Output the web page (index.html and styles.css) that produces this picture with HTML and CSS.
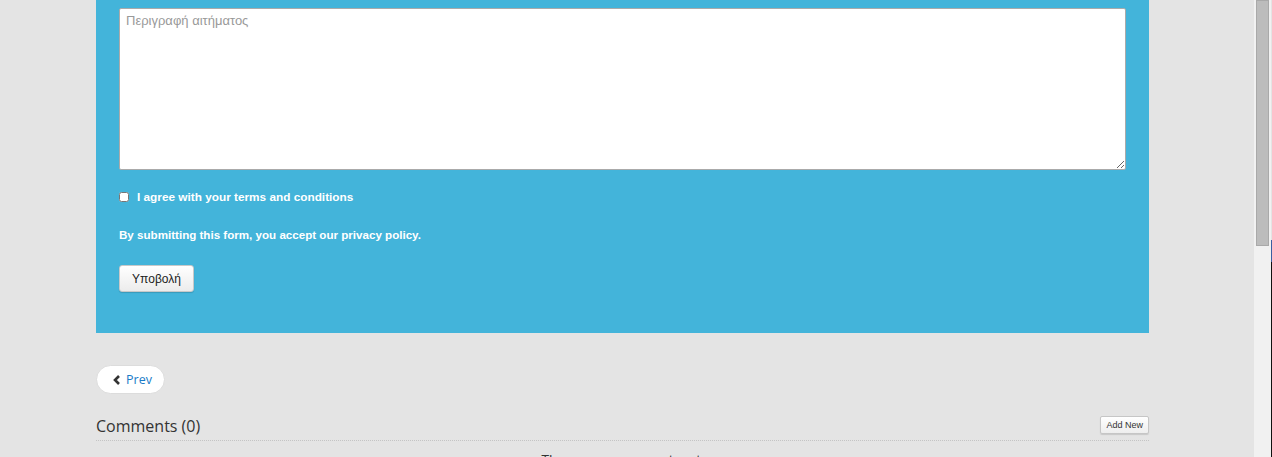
FILE: index.html
```html
<!DOCTYPE html>
<html lang="el">
<head>
  <meta charset="UTF-8" />
  <meta name="viewport" content="width=device-width, initial-scale=1" />
  <title>Αίτημα</title>
  <link rel="stylesheet" href="styles.css">
</head>
<body>

  <div class="page">
    <div class="content">
      <form class="request-form">
        <textarea class="request-text" placeholder="Περιγραφή αιτήματος"></textarea>

        <label class="terms">
          <input type="checkbox" />
          <span>I agree with your terms and conditions</span>
        </label>

        <p class="privacy">By submitting this form, you accept our privacy policy.</p>

        <button type="button" class="submit-btn">Υποβολή</button>
      </form>

      <div class="pager">
        <a href="#" class="prev-btn">
          <svg width="8" height="10" viewBox="0 0 8 10"><path d="M6 1 L2 5 L6 9" fill="none" stroke="#333" stroke-width="2.6"/></svg>
          Prev
        </a>
      </div>

      <div class="comments-head">
        <h3>Comments (0)</h3>
        <button type="button" class="add-btn">Add New</button>
      </div>
      <p class="no-comments">There are no comments yet.</p>
    </div>
  </div>

  <div class="scrollbar">
    <div class="thumb"></div>
  </div>
  <div class="edge"></div>

</body>
</html>
```

FILE: styles.css
```css
html, body {
  margin: 0;
  height: 457px;
  overflow: hidden;
}
body {
  display: flex;
  background: #e4e4e4;
  font-family: 'Liberation Sans', Arial, sans-serif;
}
.page {
  width: 1254px;
  flex-shrink: 0;
}
.content {
  width: 1053px;
  margin-left: 96px;
}
.request-form {
  background: #43b4da;
  padding: 8px 23px 41px;
  display: flex;
  flex-direction: column;
  align-items: flex-start;
}
.request-text {
  box-sizing: border-box;
  width: 1007px;
  height: 162px;
  margin: 0;
  padding: 4px 6px;
  border: 1px solid #aaa;
  border-radius: 2px;
  background: #fff;
  font-family: 'Liberation Sans', Arial, sans-serif;
  font-size: 13px;
  color: #555;
  resize: vertical;
}
.request-text::placeholder {
  color: #999;
}
.terms {
  display: flex;
  align-items: center;
  margin-top: 20px;
  color: #fff;
  font-size: 11.8px;
  font-weight: bold;
}
.terms input {
  width: 10px;
  height: 10px;
  margin: 0 8px 0 0;
}
.privacy {
  margin: 24px 0 0;
  color: #fff;
  font-size: 11.6px;
  font-weight: bold;
}
.submit-btn {
  margin-top: 24px;
  width: 75px;
  height: 27px;
  border: 1px solid #c9c9c9;
  border-radius: 3px;
  background: linear-gradient(#ffffff, #ececec);
  box-shadow: 0 1px 1px rgba(0, 0, 0, 0.15);
  font-family: 'Liberation Sans', Arial, sans-serif;
  font-size: 12px;
  color: #222;
  cursor: pointer;
}
.pager {
  padding-top: 32px;
}
.prev-btn {
  box-sizing: border-box;
  display: inline-flex;
  align-items: center;
  gap: 5px;
  width: 69px;
  height: 29px;
  padding-left: 16px;
  border: 1px solid #dcdcdc;
  border-radius: 15px;
  background: #fff;
  color: #1a7bc7;
  font-family: 'Open Sans', sans-serif;
  font-size: 12.5px;
  text-decoration: none;
}
.comments-head {
  display: flex;
  justify-content: space-between;
  align-items: flex-end;
  margin-top: 20px;
  padding-bottom: 2px;
  border-bottom: 1px dotted #c4c4c4;
}
.comments-head h3 {
  margin: 0;
  font-family: 'Open Sans', sans-serif;
  font-size: 16px;
  font-weight: normal;
  color: #333;
  line-height: 24px;
}
.add-btn {
  height: 18px;
  padding: 0 5px;
  margin-bottom: 4px;
  border: 1px solid #c6c6c6;
  border-radius: 2px;
  background: linear-gradient(#ffffff, #eeeeee);
  box-shadow: 0 1px 1px rgba(0, 0, 0, 0.12);
  font-family: 'Liberation Sans', Arial, sans-serif;
  font-size: 9px;
  color: #333;
}
.no-comments {
  margin: 11px 0 0;
  text-align: center;
  font-size: 13px;
  color: #333;
}
.scrollbar {
  width: 17px;
  background: #f1f1f1;
  flex-shrink: 0;
}
.thumb {
  box-sizing: border-box;
  width: 13px;
  height: 246px;
  margin-left: 2px;
  background: #bcbcbc;
  border: 1px solid #a9a9a9;
}
.edge {
  width: 1px;
  margin-top: 240px;
  background: linear-gradient(#3a5fa0 0, #3a5fa0 22px, #111 22px);
}
```
